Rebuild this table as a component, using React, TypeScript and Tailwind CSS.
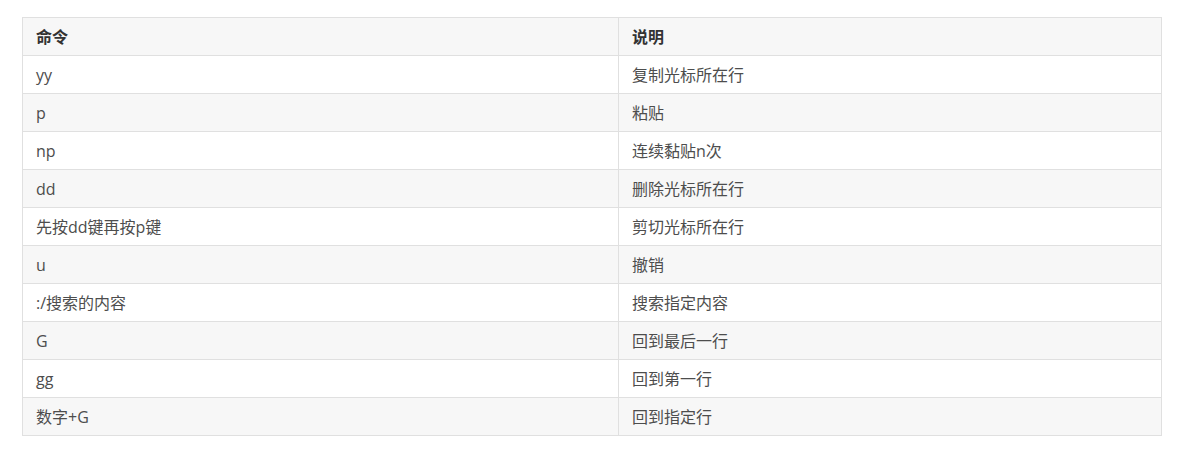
import React from 'react';

const rows: [string, string][] = [
  ['yy', '复制光标所在行'],
  ['p', '粘贴'],
  ['np', '连续黏贴n次'],
  ['dd', '删除光标所在行'],
  ['先按dd键再按p键', '剪切光标所在行'],
  ['u', '撤销'],
  [':/搜索的内容', '搜索指定内容'],
  ['G', '回到最后一行'],
  ['gg', '回到第一行'],
  ['数字+G', '回到指定行'],
];

const App: React.FC = () => {
  return (
    <div
      className="min-h-screen bg-white pl-[22px] pr-[15px] pt-[17px]"
      style={{ fontFamily: '"Open Sans", "Noto Sans CJK SC", sans-serif' }}
    >
      <table className="w-[1140px] border-collapse text-[16px] leading-[22px] text-[#333]">
        <thead>
          <tr className="h-[38px] bg-[#f7f7f7]">
            <th className="w-[596px] border border-[#e0e0e0] px-[13px] text-left font-bold">命令</th>
            <th className="border border-[#e0e0e0] px-[13px] text-left font-bold">说明</th>
          </tr>
        </thead>
        <tbody>
          {rows.map(([cmd, desc], i) => (
            <tr key={i} className={i % 2 === 1 ? 'h-[38px] bg-[#f7f7f7]' : 'h-[38px] bg-white'}>
              <td className="border border-[#e0e0e0] px-[13px] text-[#4d4d4d]">{cmd}</td>
              <td className="border border-[#e0e0e0] px-[13px] text-[#4d4d4d]">{desc}</td>
            </tr>
          ))}
        </tbody>
      </table>
    </div>
  );
};

export default App;
